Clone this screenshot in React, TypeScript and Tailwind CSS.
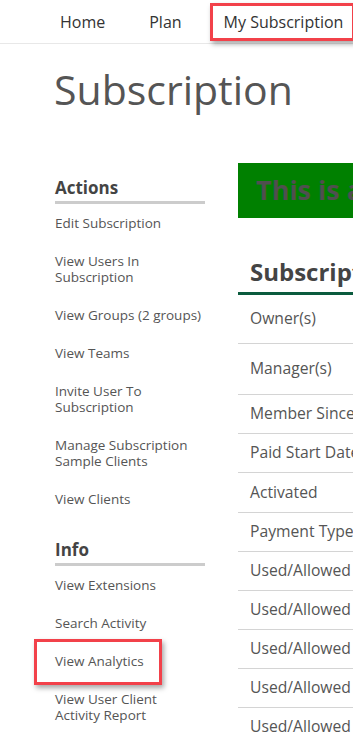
import type { ReactNode } from 'react';

const ACTIONS: string[][] = [
  ['Edit Subscription'],
  ['View Users In', 'Subscription'],
  ['View Groups (2 groups)'],
  ['View Teams'],
  ['Invite User To', 'Subscription'],
  ['Manage Subscription', 'Sample Clients'],
  ['View Clients'],
];

const INFO: string[][] = [
  ['View Extensions'],
  ['Search Activity'],
  ['View Analytics'],
  ['View User Client', 'Activity Report'],
];

const ROWS: { label: string; h: string }[] = [
  { label: 'Owner(s)', h: 'h-[49px]' },
  { label: 'Manager(s)', h: 'h-[51px]' },
  { label: 'Member Since', h: 'h-[39px]' },
  { label: 'Paid Start Date', h: 'h-[39px]' },
  { label: 'Activated', h: 'h-[40px]' },
  { label: 'Payment Type', h: 'h-[39px]' },
  { label: 'Used/Allowed', h: 'h-[39px]' },
  { label: 'Used/Allowed', h: 'h-[39px]' },
  { label: 'Used/Allowed', h: 'h-[39px]' },
  { label: 'Used/Allowed', h: 'h-[39px]' },
  { label: 'Used/Allowed', h: 'h-[39px]' },
];

function Highlight({ children, className }: { children: ReactNode; className: string }) {
  return (
    <div className={`relative ${className}`}>
      <span className="pointer-events-none absolute inset-0 border-[3px] border-[#f2414a] shadow-[2px_3px_5px_rgba(0,0,0,0.35)]" />
      {children}
    </div>
  );
}

function SideSection({ title, items }: { title: string; items: string[][] }) {
  return (
    <div>
      <h3 className="text-[17px] font-bold leading-[22px] text-[#444] pb-[2px] border-b-[3px] border-[#cccccc]">{title}</h3>
      <ul>
        {items.map((lines) => {
          const inner = (
            <a className="block text-[13.5px] leading-[16px] text-[#555] py-[11px]">
              {lines.map((l) => <span key={l} className="block whitespace-nowrap">{l}</span>)}
            </a>
          );
          return (
            <li key={lines.join(' ')}>
              {lines[0] === 'View Analytics' ? (
                <Highlight className="-mx-[21px] px-[21px] -mt-[3px] -mb-[5px] pt-[3px] pb-[5px] w-[128px]">{inner}</Highlight>
              ) : inner}
            </li>
          );
        })}
      </ul>
    </div>
  );
}

export default function App() {
  return (
    <div className="w-[353px] h-[744px] overflow-hidden bg-white font-['Open_Sans',sans-serif] text-[#555]">
      <nav className="h-[44px] border-b border-[#e8e8e8] flex items-center pl-[38px] text-[16px] text-[#333]">
        <a className="px-[22px]">Home</a>
        <a className="px-[22px]">Plan</a>
        <Highlight className="ml-[6px] h-[38px] flex items-center pl-[14px] pr-[12px] whitespace-nowrap">
          <a>My Subscription</a>
        </Highlight>
      </nav>

      <h1 className="pl-[54px] mt-[20px] text-[41px] leading-[50px] text-[#555]">Subscription</h1>

      <div className="flex pl-[55px] mt-[44px] gap-[33px]">
        <aside className="w-[150px] shrink-0 flex flex-col gap-[21px] pt-[19px]">
          <SideSection title="Actions" items={ACTIONS} />
          <SideSection title="Info" items={INFO} />
        </aside>

        <main className="w-[500px] shrink-0 pt-[5px]">
          <div className="bg-[#008000] h-[55px] flex items-center pl-[18px]">
            <span className="text-[27px] font-bold text-[#4f4f4f] whitespace-nowrap">This is a test subscription</span>
          </div>
          <h2 className="mt-[38px] pl-[12px] text-[24px] font-bold leading-[32px] text-[#444] pb-[4px] border-b-[3px] border-[#0b5b3e] whitespace-nowrap">
            Subscription Details
          </h2>
          <div>
            {ROWS.map((r, i) => (
              <div
                key={i}
                className={`flex items-center pl-[12px] text-[15.7px] text-[#555] border-b border-[#d4d4d4] whitespace-nowrap ${r.h}`}
              >
                {r.label}
              </div>
            ))}
          </div>
        </main>
      </div>
    </div>
  );
}
